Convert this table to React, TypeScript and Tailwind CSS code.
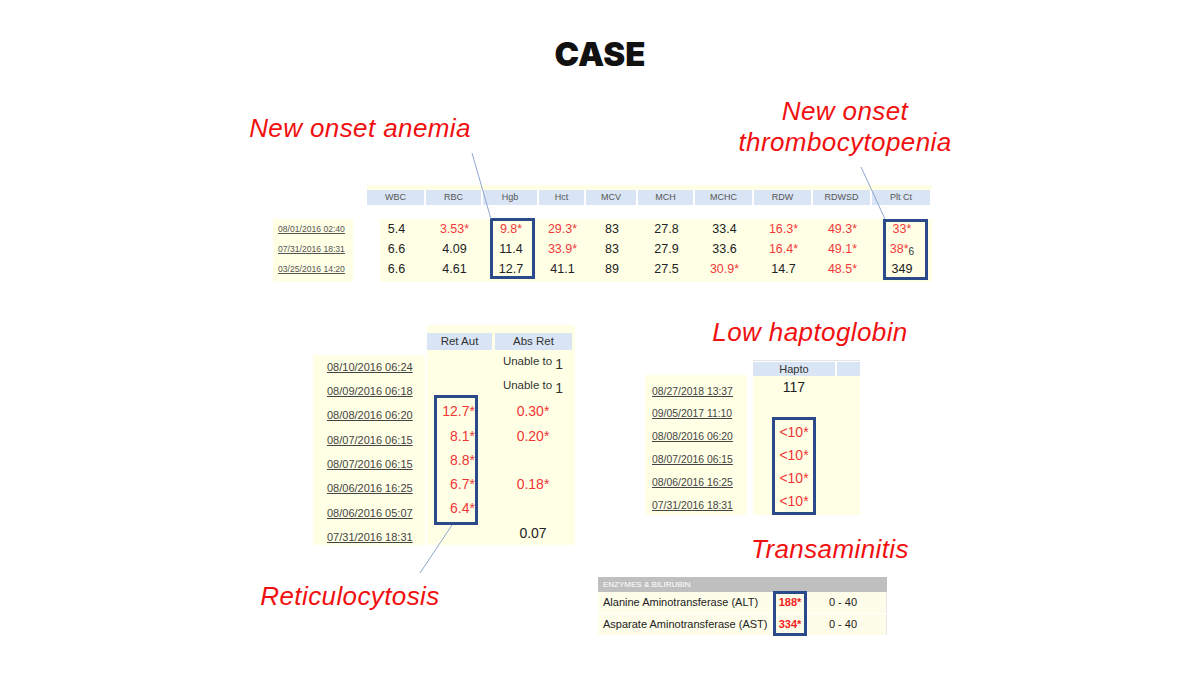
import React from 'react';

// slide: "CASE" – lab tables pasted on a white canvas
const YELLOW = 'bg-[#ffffe6]';
const HEAD = 'bg-[#d9e5f4]';

const cbcCols = [
  { name: 'WBC', w: 59 },
  { name: 'RBC', w: 57 },
  { name: 'Hgb', w: 56 },
  { name: 'Hct', w: 47 },
  { name: 'MCV', w: 52 },
  { name: 'MCH', w: 57 },
  { name: 'MCHC', w: 59 },
  { name: 'RDW', w: 59 },
  { name: 'RDWSD', w: 59 },
  { name: 'Plt Ct', w: 60 },
];

const cbcRows = [
  { date: '08/01/2016 02:40', vals: ['5.4', '3.53*', '9.8*', '29.3*', '83', '27.8', '33.4', '16.3*', '49.3*', '33*'] },
  { date: '07/31/2016 18:31', vals: ['6.6', '4.09', '11.4', '33.9*', '83', '27.9', '33.6', '16.4*', '49.1*', '38*'] },
  { date: '03/25/2016 14:20', vals: ['6.6', '4.61', '12.7', '41.1', '89', '27.5', '30.9*', '14.7', '48.5*', '349'] },
];

const retRows = [
  { date: '08/10/2016 06:24', aut: '', abs: 'unable' },
  { date: '08/09/2016 06:18', aut: '', abs: 'unable' },
  { date: '08/08/2016 06:20', aut: '12.7*', abs: '0.30*' },
  { date: '08/07/2016 06:15', aut: '8.1*', abs: '0.20*' },
  { date: '08/07/2016 06:15', aut: '8.8*', abs: '' },
  { date: '08/06/2016 16:25', aut: '6.7*', abs: '0.18*' },
  { date: '08/06/2016 05:07', aut: '6.4*', abs: '' },
  { date: '07/31/2016 18:31', aut: '', abs: '0.07' },
];

const haptoDates = ['08/27/2018 13:37', '09/05/2017 11:10', '08/08/2016 06:20', '08/07/2016 06:15', '08/06/2016 16:25', '07/31/2016 18:31'];
const haptoVals = ['117', '', '<10*', '<10*', '<10*', '<10*'];

const isHigh = (v: string) => v.endsWith('*');

function Label({ text, left, top, width }: { text: React.ReactNode; left: number; top: number; width: number }) {
  return (
    <div
      className="absolute text-center italic text-[26px] leading-[31px] tracking-[0.4px] text-[#f01010]"
      style={{ left, top, width }}
    >
      {text}
    </div>
  );
}

function Box({ left, top, w, h }: { left: number; top: number; w: number; h: number }) {
  return <div className="absolute border-[3px] border-[#2b4a8a]" style={{ left, top, width: w, height: h }} />;
}

function CbcTable() {
  return (
    <div className="absolute left-[273px] top-[185px] flex items-start">
      {/* dates */}
      <div className={`mt-[34px] w-[80px] pb-[3px] ${YELLOW}`}>
        {cbcRows.map(r => (
          <div key={r.date} className="h-[20px] flex items-center pl-[5px] text-[8.6px] text-[#555] underline">
            {r.date}
          </div>
        ))}
      </div>
      <div className="ml-[14px] w-[565px]">
        <div className={`h-[5px] ${YELLOW}`} />
        <div className="flex h-[15px]">
          {cbcCols.map(c => (
            <div key={c.name} style={{ width: c.w }} className="pr-[2px] h-full">
              <div className={`${HEAD} h-full flex items-center justify-center text-[9px] text-[#555]`}>{c.name}</div>
            </div>
          ))}
        </div>
        <div className="h-[14px]" />
        <div className="bg-[linear-gradient(to_right,white_13px,#ffffe6_13px)] pb-[3px]">
          {cbcRows.map((r, ri) => (
            <div key={r.date} className="flex h-[20px] items-center">
              {r.vals.map((v, i) => (
                <div
                  key={i}
                  style={{ width: cbcCols[i].w }}
                  className={`text-center text-[12.5px] ${isHigh(v) ? 'text-[#f23a3a]' : 'text-[#222]'}`}
                >
                  {v}
                  {ri === 1 && i === 9 && <sub className="text-[#333] text-[10px]">6</sub>}
                </div>
              ))}
            </div>
          ))}
        </div>
      </div>
    </div>
  );
}

function RetTable() {
  return (
    <div className="absolute left-[313px] top-[325px] flex items-start">
      <div className={`mt-[30px] w-[112px] h-[190px] ${YELLOW}`}>
        {retRows.map((r, i) => (
          <div key={i} className="h-[24.3px] flex items-center pl-[14px] text-[11px] text-[#444] underline">
            {r.date}
          </div>
        ))}
      </div>
      <div className={`ml-[2px] w-[148px] h-[220px] pt-[8px] ${YELLOW}`}>
        <div className="flex gap-[3px] h-[17px] text-[11.5px] text-[#333]">
          <div className={`w-[65px] ${HEAD} flex items-center justify-center`}>Ret Aut</div>
          <div className={`w-[77px] ${HEAD} flex items-center justify-center`}>Abs Ret</div>
        </div>
        <div className="mt-[1px]">
          {retRows.map((r, i) => (
            <div key={i} className="flex h-[24.3px] items-center text-[14px]">
              <div className="w-[66px] text-right pr-[18px] text-[#f03535]">{r.aut}</div>
              <div className={`w-[80px] text-center ${isHigh(r.abs) ? 'text-[#f03535]' : 'text-[#222]'}`}>
                {r.abs === 'unable' ? (
                  <span className="relative -top-[3px] text-[#333]">
                    <span className="text-[11.5px]">Unable to </span>
                    <span className="relative top-[4px] text-[14px]">1</span>
                  </span>
                ) : (
                  r.abs
                )}
              </div>
            </div>
          ))}
        </div>
      </div>
    </div>
  );
}

function HaptoTable() {
  return (
    <div className="absolute left-[645px] top-[360px] flex items-start">
      <div className={`mt-[15px] w-[102px] h-[140px] pt-[5px] ${YELLOW}`}>
        {haptoDates.map(d => (
          <div key={d} className="h-[22.8px] flex items-center pl-[7px] text-[10.4px] text-[#444] underline">
            {d}
          </div>
        ))}
      </div>
      <div className="ml-[6px] w-[107px]">
        <div className="border-t border-[#e4e4e4] pt-[1px] flex gap-[2px] h-[16px]">
          <div className={`w-[82px] ${HEAD} flex items-center justify-center text-[11px] text-[#333]`}>Hapto</div>
          <div className={`w-[23px] ${HEAD}`} />
        </div>
        <div className={`h-[139px] ${YELLOW}`}>
          {haptoVals.map((v, i) => (
            <div key={i} className={`h-[22.8px] w-[82px] flex items-center justify-center text-[14px] ${isHigh(v) ? 'text-[#f03535]' : 'text-[#222]'}`}>
              {v}
            </div>
          ))}
        </div>
      </div>
    </div>
  );
}

function EnzymeTable() {
  const rows = [
    ['Alanine Aminotransferase (ALT)', '188*'],
    ['Asparate Aminotransferase (AST)', '334*'],
  ];
  return (
    <div className="absolute left-[598px] top-[577px] w-[289px]">
      <div className="h-[15px] bg-[#bfbfbf] flex items-center pl-[5px] text-[8px] text-white uppercase">Enzymes &amp; Bilirubin</div>
      {rows.map(([name, val]) => (
        <div key={name} className="flex h-[22px] border-b border-white bg-[#fdfde9] text-[11px] text-[#222]">
          <div className="w-[174px] pl-[5px] flex items-center">{name}</div>
          <div className="w-[35px] border-l border-white flex items-center justify-center font-bold text-[#f01d1d]">{val}</div>
          <div className="w-[80px] border-l border-white flex items-center justify-center pr-[8px] border-r border-r-[#e6e6e6]">0 - 40</div>
        </div>
      ))}
    </div>
  );
}

export default function App() {
  return (
    <div className="relative w-[1200px] h-[675px] bg-white overflow-hidden font-['Liberation_Sans',Arial,sans-serif]">
      <div className="pt-[38px] text-center font-['Inter',sans-serif] font-black text-[33px] leading-none text-[#111]">CASE</div>

      <Label text="New onset anemia" left={230} top={113} width={260} />
      <Label text={<>New onset<br />thrombocytopenia</>} left={715} top={96} width={260} />
      <Label text="Low haptoglobin" left={680} top={317} width={260} />
      <Label text="Transaminitis" left={700} top={534} width={260} />
      <Label text="Reticulocytosis" left={220} top={581} width={260} />

      <CbcTable />
      <RetTable />
      <HaptoTable />
      <EnzymeTable />

      <Box left={490} top={218} w={45} h={61} />
      <Box left={883} top={219} w={45} h={61} />
      <Box left={434} top={395} w={44} h={130} />
      <Box left={772} top={417} w={44} h={98} />
      <Box left={773} top={591} w={34} h={45} />

      {/* pointer lines */}
      <svg className="absolute inset-0 pointer-events-none" width="1200" height="675">
        <line x1="472" y1="153" x2="491" y2="219" stroke="#8fa6cf" strokeWidth="1" />
        <line x1="861" y1="167" x2="885" y2="219" stroke="#8fa6cf" strokeWidth="1" />
        <line x1="452" y1="525" x2="420" y2="573" stroke="#8fa6cf" strokeWidth="1" />
      </svg>
    </div>
  );
}
